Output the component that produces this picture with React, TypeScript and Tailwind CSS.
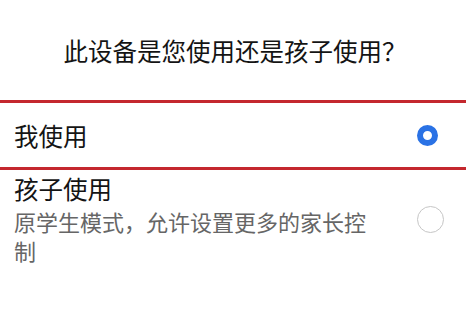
import React from "react";

// 选择设备使用者的对话框
export default function App() {
  return (
    <div
      lang="zh-CN"
      className="w-[466px] h-[313px] bg-white overflow-hidden"
      style={{ fontFamily: '"Noto Sans CJK SC", "Noto Sans", sans-serif' }}
    >
      {/* 标题 */}
      <div className="h-[100px] flex items-center justify-center pt-[2px] pl-[4px]">
        <p className="text-[24.5px] leading-[30px] text-[#141414]">此设备是您使用还是孩子使用？</p>
      </div>

      {/* 我使用 (选中) */}
      <div className="h-[70px] border-y-[3px] border-[#c4282e] flex items-center pl-[14px] pr-[21px]">
        <span className="flex-1 text-[24.5px] leading-[30px] text-[#141414] pt-[2px]">我使用</span>
        <div className="w-[28px] flex justify-start">
          <div className="w-[21px] h-[21px] rounded-full border-[6px] border-[#2a72e5] bg-white" />
        </div>
      </div>

      {/* 孩子使用 */}
      <div className="flex items-center pl-[14px] pr-[21px] pt-[3px]">
        <div className="w-[366px] flex flex-col">
          <span className="text-[24.5px] leading-[32px] text-[#141414]">孩子使用</span>
          <span className="text-[22px] leading-[29px] text-[#666666] mt-[2px]">
            原学生模式，允许设置更多的家长控制
          </span>
        </div>
        <div className="flex-1" />
        <div className="w-[28px] flex justify-start">
          <div className="w-[27px] h-[27px] rounded-full border-[1.5px] border-[#c6c6c6] bg-white" />
        </div>
      </div>
    </div>
  );
}
